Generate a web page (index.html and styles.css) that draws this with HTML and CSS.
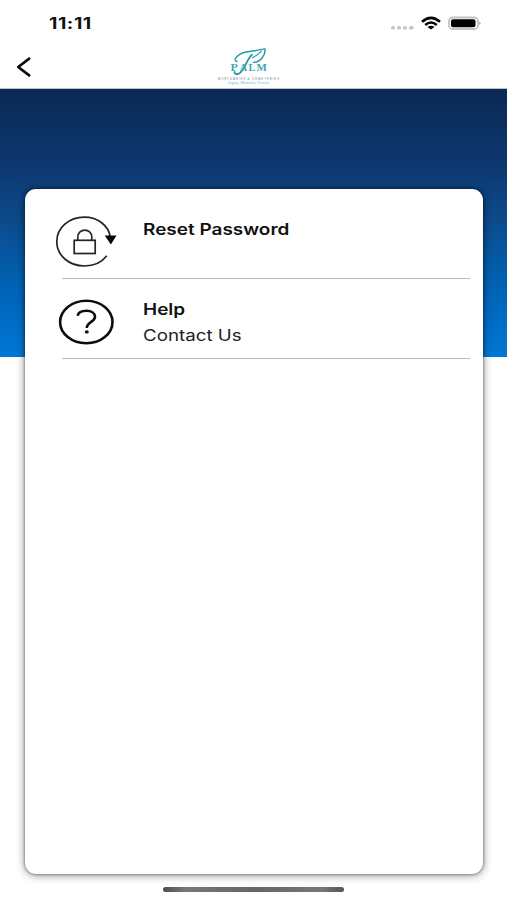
FILE: index.html
```html
<!DOCTYPE html>
<html lang="en">
<head>
<meta charset="utf-8">
<title>Palm Settings</title>
<link rel="stylesheet" href="styles.css">
</head>
<body>
<div class="status">
  <span class="time">11:11</span>
  <svg class="indicators" width="96" height="20" viewBox="0 0 96 20">
    <g fill="#c6c6c6"><rect x="6" y="11" width="4" height="3.6" rx="1.5"/><rect x="12" y="11" width="4" height="3.6" rx="1.5"/><rect x="18" y="11" width="4" height="3.6" rx="1.5"/><rect x="24" y="11" width="4.5" height="3.6" rx="1.5"/></g>
    <g fill="none" stroke="#050505" stroke-width="2.5"><path d="M37 6.8Q46 -1 55 6.8"/><path d="M40.2 10Q46 5 51.8 10"/></g>
    <path d="M42.5 12Q46 9.4 49.5 12L46 14.6Z" fill="#050505"/>
    <rect x="64" y="2.5" width="29" height="11.5" rx="3.5" fill="#fff" stroke="#c4c4c4" stroke-width="1.8"/>
    <rect x="66" y="4.3" width="24.5" height="8" rx="2" fill="#000"/>
    <path d="M94.3 6.5Q97 8.3 94.3 10Z" fill="#999"/>
  </svg>
</div>
<header class="nav">
  <svg class="back" width="16" height="22" viewBox="0 0 16 22"><path d="M13.2 2.6L2.2 11L13.2 19.4" fill="none" stroke="#0a0a0a" stroke-width="2.6" stroke-linecap="round" stroke-linejoin="round"/></svg>
  <svg class="logo" width="64" height="42" viewBox="0 0 64 42">
    <g fill="none" stroke="#2199a8" stroke-linecap="round" stroke-linejoin="round">
      <path stroke-width="1.4" d="M20 15.5C14.5 14.5 22 6.6 31 5.8C38 5.2 42.5 3.4 48 2.9C48.6 9 44 15.8 36.5 16.4"/>
      <path stroke-width="1.1" d="M35.3 11.8C38.5 10.2 42 7.8 44.4 5.2"/>
      <path stroke-width="1.8" d="M35 8.6C29.5 13.5 28 23.5 22.5 27.2C19.8 28.8 17 27.8 17.6 25.9"/>
    </g>
    <g class="serif" fill="#3fa5b2">
      <text x="13.5" y="25" font-size="10" textLength="7.3" lengthAdjust="spacingAndGlyphs">P</text>
      <text x="22.8" y="25" font-size="10" textLength="7.4" lengthAdjust="spacingAndGlyphs">A</text>
      <text x="31.4" y="25" font-size="10" textLength="6.8" lengthAdjust="spacingAndGlyphs">L</text>
      <text x="39.6" y="25" font-size="10" textLength="10.3" lengthAdjust="spacingAndGlyphs">M</text>
    </g>
    <text class="sub" x="1" y="33.5" font-size="2.8" fill="#737a7d" textLength="61" lengthAdjust="spacing">MORTUARIES &amp; CEMETERIES</text>
    <text class="script" x="11" y="38.3" font-size="3.5" fill="#63b5bf" textLength="41" lengthAdjust="spacingAndGlyphs">Legacy, Memories, Forever</text>
  </svg>
</header>
<main class="stage">
  <section class="card">
    <div class="row">
      <svg width="64" height="54" viewBox="0 0 64 54" fill="none" stroke="#242424">
        <path d="M55.3 22C53.5 10.5 42.8 2.2 29.3 2.2C14 2.2 1.8 12.8 1.8 26.5C1.8 40.5 14 51 29.5 51C38.7 51 46.8 47.3 51.8 40.8" stroke-width="1.7"/>
        <path d="M49.7 20.5H61.5L55.9 29.5Z" fill="#080808" stroke="none"/>
        <rect x="19.2" y="25.3" width="21" height="13.2" stroke-width="1.7"/>
        <path d="M22.8 25V22.2C22.8 12.8 36.8 12.8 36.8 22.2V25" stroke-width="1.7"/>
      </svg>
      <div class="copy"><h2><span class="wide reset">Reset Password</span></h2></div>
    </div>
    <div class="row">
      <svg width="64" height="54" viewBox="0 0 64 54" fill="none" stroke="#0c0c0c">
        <ellipse cx="31.3" cy="27" rx="26.2" ry="21.3" stroke-width="2.6"/>
        <path d="M22.6 20.8C23.4 17.5 26.6 15.8 31.3 15.8C36.8 15.8 40 18.2 40 21.8C40 27.2 31.8 26.5 31.8 33" stroke-width="2.6"/>
        <ellipse cx="31.8" cy="36.9" rx="2" ry="1.7" fill="#0c0c0c" stroke="none"/>
      </svg>
      <div class="copy"><h2><span class="wide help">Help</span></h2><p><span class="wide contact">Contact Us</span></p></div>
    </div>
  </section>
</main>
<div class="home"></div>
</body>
</html>
```
FILE: styles.css
```css
* { box-sizing: border-box; }
body {
  margin: 0;
  height: 900px;
  overflow: hidden;
  display: flex;
  flex-direction: column;
  background: #fff;
  color: #111;
  font-family: Inter, "Liberation Sans", sans-serif;
}
svg { display: block; flex: none; }
.status {
  height: 46px;
  flex: none;
  display: flex;
  justify-content: space-between;
  padding: 15px 26px 0 49px;
}
.time {
  font-size: 15.5px;
  line-height: 18px;
  font-weight: 700;
  letter-spacing: .4px;
  transform: scaleX(1.26);
  transform-origin: left;
}
.nav {
  height: 43px;
  flex: none;
  display: flex;
  align-items: flex-start;
  border-bottom: 1px solid #b9c1cc;
}
.back { margin: 10px 0 0 16px; }
.logo { margin-left: 185px; }
.serif { font-family: "Liberation Serif", serif; font-weight: 700; }
.sub { font-family: "Liberation Sans", sans-serif; }
.script { font-family: "Liberation Serif", serif; font-style: italic; }
.stage {
  height: 785px;
  flex: none;
  padding: 100px 24px 0 25px;
  background: linear-gradient(#0b2855, #0d386f 28%, #0c4b8b 49%, #0063b6 74%, #0078d5) top / 100% 268px no-repeat;
}
.card {
  height: 685px;
  border-radius: 11px;
  background: #fff;
  padding: 10px 13px 0 30px;
  box-shadow: 0 0 3px rgba(0, 0, 0, .55), 0 1px 10px rgba(0, 0, 0, .45);
}
.row {
  height: 80px;
  display: flex;
  padding-top: 16px;
  background: linear-gradient(#b9b9b9, #b9b9b9) right bottom / calc(100% - 7px) 1px no-repeat;
}
.copy { margin-left: 24px; padding-top: 2px; }
.copy h2, .copy p {
  margin: 0;
  font-size: 16px;
  line-height: 24px;
  font-weight: 600;
}
.copy p { font-weight: 400; line-height: 28px; color: #222; }
.wide { display: inline-block; transform: scaleX(1.185); transform-origin: left; }
.contact { transform: scaleX(1.17); }
.home {
  width: 181px;
  height: 5px;
  margin: 13px 0 0 163px;
  border-radius: 3px;
  background: linear-gradient(90deg, #4e4e4e, #777 12%, #666 50%, #777 88%, #555);
}
```
